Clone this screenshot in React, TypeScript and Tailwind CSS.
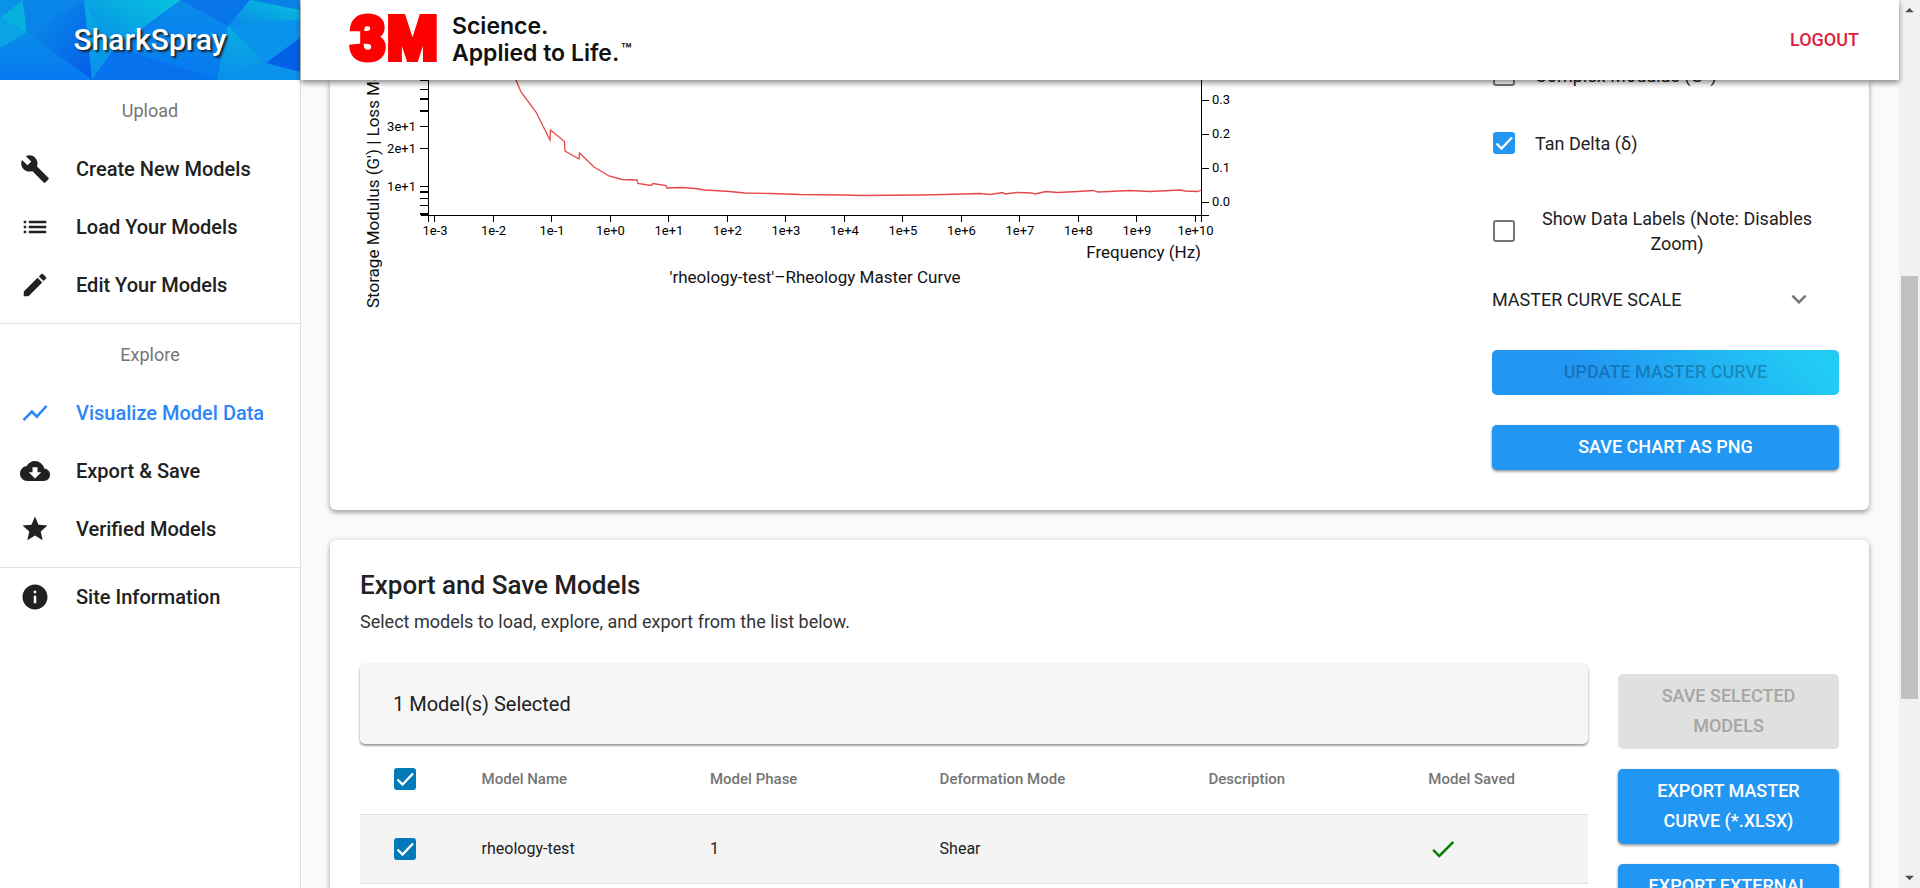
import React from "react";
import { MdBuild, MdList, MdEdit, MdShowChart, MdCloudDownload, MdStar, MdInfo, MdExpandMore, MdCheck, MdArrowDropUp, MdArrowDropDown } from "react-icons/md";
import type { IconType } from "react-icons";

const cardShadow = "shadow-[0_1px_6px_rgba(0,0,0,0.2),0_3px_4px_rgba(0,0,0,0.22)]";

type NavEntry = { label: string; icon: IconType; active?: boolean };

const uploadItems: NavEntry[] = [
  { label: "Create New Models", icon: MdBuild },
  { label: "Load Your Models", icon: MdList },
  { label: "Edit Your Models", icon: MdEdit },
];
const exploreItems: NavEntry[] = [
  { label: "Visualize Model Data", icon: MdShowChart, active: true },
  { label: "Export & Save", icon: MdCloudDownload },
  { label: "Verified Models", icon: MdStar },
];

function NavItem({ label, icon: Icon, active }: NavEntry) {
  return (
    <li>
      <a
        href="#"
        className={`flex h-[58px] items-center gap-[26px] pl-5 text-[20px] font-medium ${active ? "text-[#2d86f7]" : "text-[#212121]"}`}
      >
        <Icon size={30} aria-hidden="true" />
        {label}
      </a>
    </li>
  );
}

function NavGroup({ title, items }: { title: string; items: NavEntry[] }) {
  return (
    <div className="border-b border-[#e0e0e0] pb-[9px]">
      <h2 className="flex h-[60px] items-center justify-center text-[18px] text-[#757575]">{title}</h2>
      <ul>
        {items.map((item) => (
          <NavItem key={item.label} {...item} />
        ))}
      </ul>
    </div>
  );
}

function BrandBackdrop() {
  return (
    <svg viewBox="0 0 300 80" preserveAspectRatio="none" className="absolute inset-0 size-full" aria-hidden="true">
      <defs>
        <linearGradient id="deep" x1="0" y1="0" x2="1" y2="1">
          <stop offset="0" stopColor="#0a92e8" />
          <stop offset="1" stopColor="#055ce9" />
        </linearGradient>
        <linearGradient id="aqua" x1="1" y1="0" x2="0" y2="1">
          <stop offset="0" stopColor="#06c4dc" />
          <stop offset="1" stopColor="#0a86ea" />
        </linearGradient>
        <linearGradient id="mid" x1="0" y1="0" x2="0" y2="1">
          <stop offset="0" stopColor="#08aee2" />
          <stop offset="1" stopColor="#0a8fea" />
        </linearGradient>
        <linearGradient id="fall" x1="0" y1="0" x2="0" y2="1">
          <stop offset="0" stopColor="#0a8cea" />
          <stop offset="1" stopColor="#067af0" />
        </linearGradient>
      </defs>
      <rect width="300" height="80" fill="#087eec" />
      <polygon points="0,0 23,0 0,18" fill="#0a92e6" />
      <polygon points="0,18 23,0 27,33" fill="#08b0de" />
      <polygon points="0,18 27,33 0,48" fill="#0aa4e4" />
      <polygon points="23,0 84,0 27,33" fill="#0a86ea" />
      <polygon points="27,33 84,0 92,80" fill="url(#deep)" />
      <polygon points="0,48 27,33 92,80 0,80" fill="url(#fall)" />
      <polygon points="84,0 112,52 92,80" fill="url(#mid)" />
      <polygon points="84,0 181,0 140,30 112,52" fill="url(#aqua)" />
      <polygon points="181,0 228,26 217,80 124,50" fill="url(#fall)" />
      <polygon points="181,0 250,0 228,26" fill="#0876ea" />
      <polygon points="250,0 300,0 300,10" fill="#0a80e8" />
      <polygon points="250,0 300,10 300,20 228,26" fill="url(#aqua)" />
      <polygon points="228,26 300,20 300,38 266,63" fill="#0a92ec" />
      <polygon points="228,26 266,63 217,80" fill="url(#mid)" />
      <polygon points="266,63 300,38 300,72" fill="#0560e8" />
      <polygon points="266,63 300,72 300,80 217,80" fill="#0a92ec" />
      <polygon points="124,50 217,80 160,68" fill="#0560e8" />
      <polygon points="112,52 124,50 217,80 92,80" fill="#0672ee" />
    </svg>
  );
}

function Sidebar() {
  return (
    <aside className="w-[301px] shrink-0 border-r border-[#e0e0e0] bg-white">
      <div className="relative flex h-20 items-center justify-center">
        <BrandBackdrop />
        <h1 className="relative text-[30px] leading-9 font-medium text-white [text-shadow:2px_2px_2px_#222]">SharkSpray</h1>
      </div>
      <nav aria-label="Main">
        <NavGroup title="Upload" items={uploadItems} />
        <NavGroup title="Explore" items={exploreItems} />
        <ul>
          <NavItem label="Site Information" icon={MdInfo} />
        </ul>
      </nav>
    </aside>
  );
}

function Logo() {
  return (
    <svg width="300" height="80" viewBox="0 0 300 80" role="img" aria-label="3M Science. Applied to Life.">
      <g fill="#ff0000" stroke="#ff0000" strokeWidth="6" fontFamily="Liberation Sans, sans-serif" fontWeight="700" fontSize="61">
        <text x="2" y="59">3</text>
        <text x="38" y="59">M</text>
      </g>
      <g fill="#111" fontFamily="Inter, sans-serif" fontWeight="600" fontSize="23">
        <text x="103" y="34">Science.</text>
        <text x="103" y="61">Applied to Life.</text>
        <text x="272" y="56" fontSize="17">™</text>
      </g>
    </svg>
  );
}

const xTicks = ["1e-3", "1e-2", "1e-1", "1e+0", "1e+1", "1e+2", "1e+3", "1e+4", "1e+5", "1e+6", "1e+7", "1e+8", "1e+9", "1e+10"];
const yTicks: [string, number][] = [["3e+1", 46], ["2e+1", 68], ["1e+1", 106]];
const thinTicks = [0, 9, 118, 125];
const thickTicks = [19, 31, 112, 134];
const rightTicks: [string, number][] = [["0.3", 20], ["0.2", 54], ["0.1", 88], ["0.0", 122]];

function MasterCurve() {
  return (
    <svg width="900" height="240" viewBox="0 0 900 240" className="block shrink-0" role="img" aria-label="Rheology master curve" fontFamily="Roboto, sans-serif">
      <g stroke="#000" strokeWidth="1" fill="none" shapeRendering="crispEdges">
        <path d="M68.5 -10V142M61 135.5H842M841.5 -10V142" />
        {yTicks.map(([label, y]) => <path key={label} d={`M60 ${y + 0.5}H68`} />)}
        {thinTicks.map((y) => <path key={y} d={`M60 ${y + 0.5}H68`} />)}
        {thickTicks.map((y) => <path key={y} strokeWidth="2" d={`M60 ${y}H68`} />)}
        {xTicks.map((label, i) => <path key={label} d={`M${Math.round(74 + i * 58.5) + 0.5} 135V142`} />)}
        {rightTicks.map(([label, y]) => <path key={label} d={`M842 ${y + 0.5}H849`} />)}
        <path d="M842 135.5H849" />
      </g>
      <g fontSize="13" fill="#000">
        {yTicks.map(([label, y]) => <text key={label} x="56" y={y + 5} textAnchor="end">{label}</text>)}
        {xTicks.map((label, i) => <text key={label} x={75 + i * 58.5} y="155" textAnchor="middle">{label}</text>)}
        {rightTicks.map(([label, y]) => <text key={label} x="852" y={y + 4}>{label}</text>)}
      </g>
      <path
        fill="none"
        stroke="#e5484a"
        strokeWidth="1.3"
        d="M153 -10L156 0L161 12L176 32L190 60L190.500 50L204.500 61.500L205 71L219 79L219.500 73L234 87L249 96L262 99.500L277 100L278 103.500L291 105.500L293 103.500L306 105.500L307 108L322 107.500L335 108.500L345 110L370 111.500L385 113L412 113.500L440 114.500L484 115L500 115.500L562 115L584 114.500L620 113.500L630 114.500L643 112.500L645 114L657 112.500L672 113L675 114L686 111.500L698 112.500L718 111.500L733 110.500L738 112L770 110.500L790 111.500L820 110L825 111L838 111.500L841 110"
      />
      <g fontSize="17" fill="#111">
        <text transform="translate(19 228) rotate(-90)">Storage Modulus (G') | Loss Modulus (G'')</text>
        <text x="841" y="178" textAnchor="end">Frequency (Hz)</text>
        <text x="455" y="203" textAnchor="middle">'rheology-test'–Rheology Master Curve</text>
      </g>
    </svg>
  );
}

function Checkbox({ id, checked, tone = "bg-[#2196f3]", label }: { id: string; checked?: boolean; tone?: string; label?: string }) {
  return (
    <span className="relative flex size-[22px] shrink-0">
      <input
        id={id}
        type="checkbox"
        defaultChecked={checked}
        aria-label={label}
        className={`size-full appearance-none rounded-[3px] ${checked ? tone : "border-2 border-[#757575]"}`}
      />
      {checked && (
        <svg viewBox="0 0 22 22" className="pointer-events-none absolute inset-0" fill="none" stroke="#fff" strokeWidth="2.400" aria-hidden="true">
          <path d="M3.500 11.500L8.500 16.500L19 5.500" />
        </svg>
      )}
    </span>
  );
}

const blueButton = "rounded-[5px] bg-[#2196f3] pb-0.5 font-medium text-white shadow-[0_1px_3px_rgba(0,0,0,0.3),0_2px_3px_rgba(0,0,0,0.2)]";

function ChartCard() {
  return (
    <section className={`flex justify-between rounded-b-md bg-white pr-[30px] pb-10 pl-[30px] ${cardShadow}`}>
      <MasterCurve />
      <div className="flex w-[347px] flex-col text-[18px] leading-[25px] text-[#212121]">
        <div className="-mt-4 flex h-[22px] items-center gap-5 pl-px">
          <Checkbox id="complex" />
          <label htmlFor="complex">Complex Modulus (G*)</label>
        </div>
        <div className="mt-[46px] flex h-[22px] items-center gap-5 pl-px">
          <Checkbox id="tan" checked />
          <label htmlFor="tan">Tan Delta (δ)</label>
        </div>
        <div className="mt-[52px] flex h-[50px] items-center gap-5 pr-5 pl-px">
          <Checkbox id="labels" />
          <label htmlFor="labels" className="flex-1 text-center">Show Data Labels (Note: Disables Zoom)</label>
        </div>
        <button type="button" className="mt-[28px] flex h-[30px] items-center justify-between pr-[25px]">
          MASTER CURVE SCALE
          <MdExpandMore size={30} className="text-[#757575]" aria-hidden="true" />
        </button>
        <button type="button" disabled className="mt-9 h-[45px] rounded-[5px] bg-linear-[45deg,#2196f3_30%,#21cbf3_90%] pb-0.5 font-medium text-black/26">
          UPDATE MASTER CURVE
        </button>
        <button type="button" className={`mt-[30px] h-[45px] ${blueButton}`}>SAVE CHART AS PNG</button>
      </div>
    </section>
  );
}

function ExportCard() {
  return (
    <section className={`mt-[30px] rounded-md bg-white p-[30px] ${cardShadow}`}>
      <h2 className="text-[26px] leading-[30px] font-medium text-[#212121]">Export and Save Models</h2>
      <p className="mt-[9px] text-[18px] leading-[26px] text-[#333]">Select models to load, explore, and export from the list below.</p>
      <div className="mt-[29px] flex items-start gap-[30px]">
        <div className="min-w-0 flex-1">
          <div className="flex h-20 items-center rounded-[5px] bg-[#f6f6f6] pl-[33px] text-[20px] text-[#212121] shadow-[0_1px_3px_rgba(0,0,0,0.25),0_2px_2px_rgba(0,0,0,0.25)]">
            1 Model(s) Selected
          </div>
          <table className="w-full table-fixed text-left">
            <colgroup>
              <col className="w-[9.900%]" />
              <col className="w-[18.600%]" />
              <col className="w-[18.700%]" />
              <col className="w-[21.900%]" />
              <col className="w-[17.900%]" />
              <col />
            </colgroup>
            <thead>
              <tr className="h-[70px] border-b border-[#e0e0e0] text-[15px] text-[#757575] [&>th]:font-medium">
                <th scope="col" className="pl-[34px]"><Checkbox id="all" checked tone="bg-[#007ab8]" label="Select all models" /></th>
                <th scope="col">Model Name</th>
                <th scope="col">Model Phase</th>
                <th scope="col">Deformation Mode</th>
                <th scope="col">Description</th>
                <th scope="col">Model Saved</th>
              </tr>
            </thead>
            <tbody>
              <tr className="h-[69px] border-b border-[#e0e0e0] bg-[#f4f4f4] text-[16px] text-[#212121]">
                <td className="pl-[34px]"><Checkbox id="row" checked tone="bg-[#007ab8]" label="Select rheology-test" /></td>
                <td>rheology-test</td>
                <td>1</td>
                <td>Shear</td>
                <td></td>
                <td><MdCheck size={30} className="text-[#008000]" aria-label="Saved" /></td>
              </tr>
            </tbody>
          </table>
        </div>
        <div className="flex w-[221px] flex-col gap-5 pt-[10px] text-[18px] leading-[30px]">
          <button type="button" disabled className="h-[75px] rounded-[5px] bg-[#e0e0e0] px-5 pb-0.5 font-medium text-[#a6a6a6]">SAVE SELECTED MODELS</button>
          <button type="button" className={`h-[75px] px-5 ${blueButton}`}>EXPORT MASTER CURVE (*.XLSX)</button>
          <button type="button" className={`h-[75px] px-5 ${blueButton}`}>EXPORT EXTERNAL DATA (*.XLSX)</button>
        </div>
      </div>
    </section>
  );
}

export default function App() {
  return (
    <div className="flex h-screen overflow-hidden bg-[#fafafa] font-[Roboto,sans-serif]">
      <Sidebar />
      <div className="flex min-w-0 flex-1 flex-col">
        <header className="z-10 flex h-20 shrink-0 items-center justify-between bg-white pr-10 pl-12 shadow-[0_2px_5px_rgba(0,0,0,0.3),0_4px_6px_rgba(0,0,0,0.2)]">
          <Logo />
          <button type="button" className="pb-0.5 text-[18px] font-medium text-[#dc1f3c]">LOGOUT</button>
        </header>
        <main className="min-h-0 flex-1 overflow-hidden pr-[30px] pl-[29px]">
          <ChartCard />
          <ExportCard />
        </main>
      </div>
      <div className="flex w-[21px] shrink-0 flex-col items-center bg-[#f1f1f1]" aria-hidden="true">
        <MdArrowDropUp size={21} className="shrink-0 text-[#505050]" />
        <div className="w-full flex-[255]" />
        <div className="w-[17px] flex-[423] bg-[#c1c1c1]" />
        <div className="w-full flex-[168]" />
        <MdArrowDropDown size={21} className="shrink-0 text-[#505050]" />
      </div>
    </div>
  );
}
